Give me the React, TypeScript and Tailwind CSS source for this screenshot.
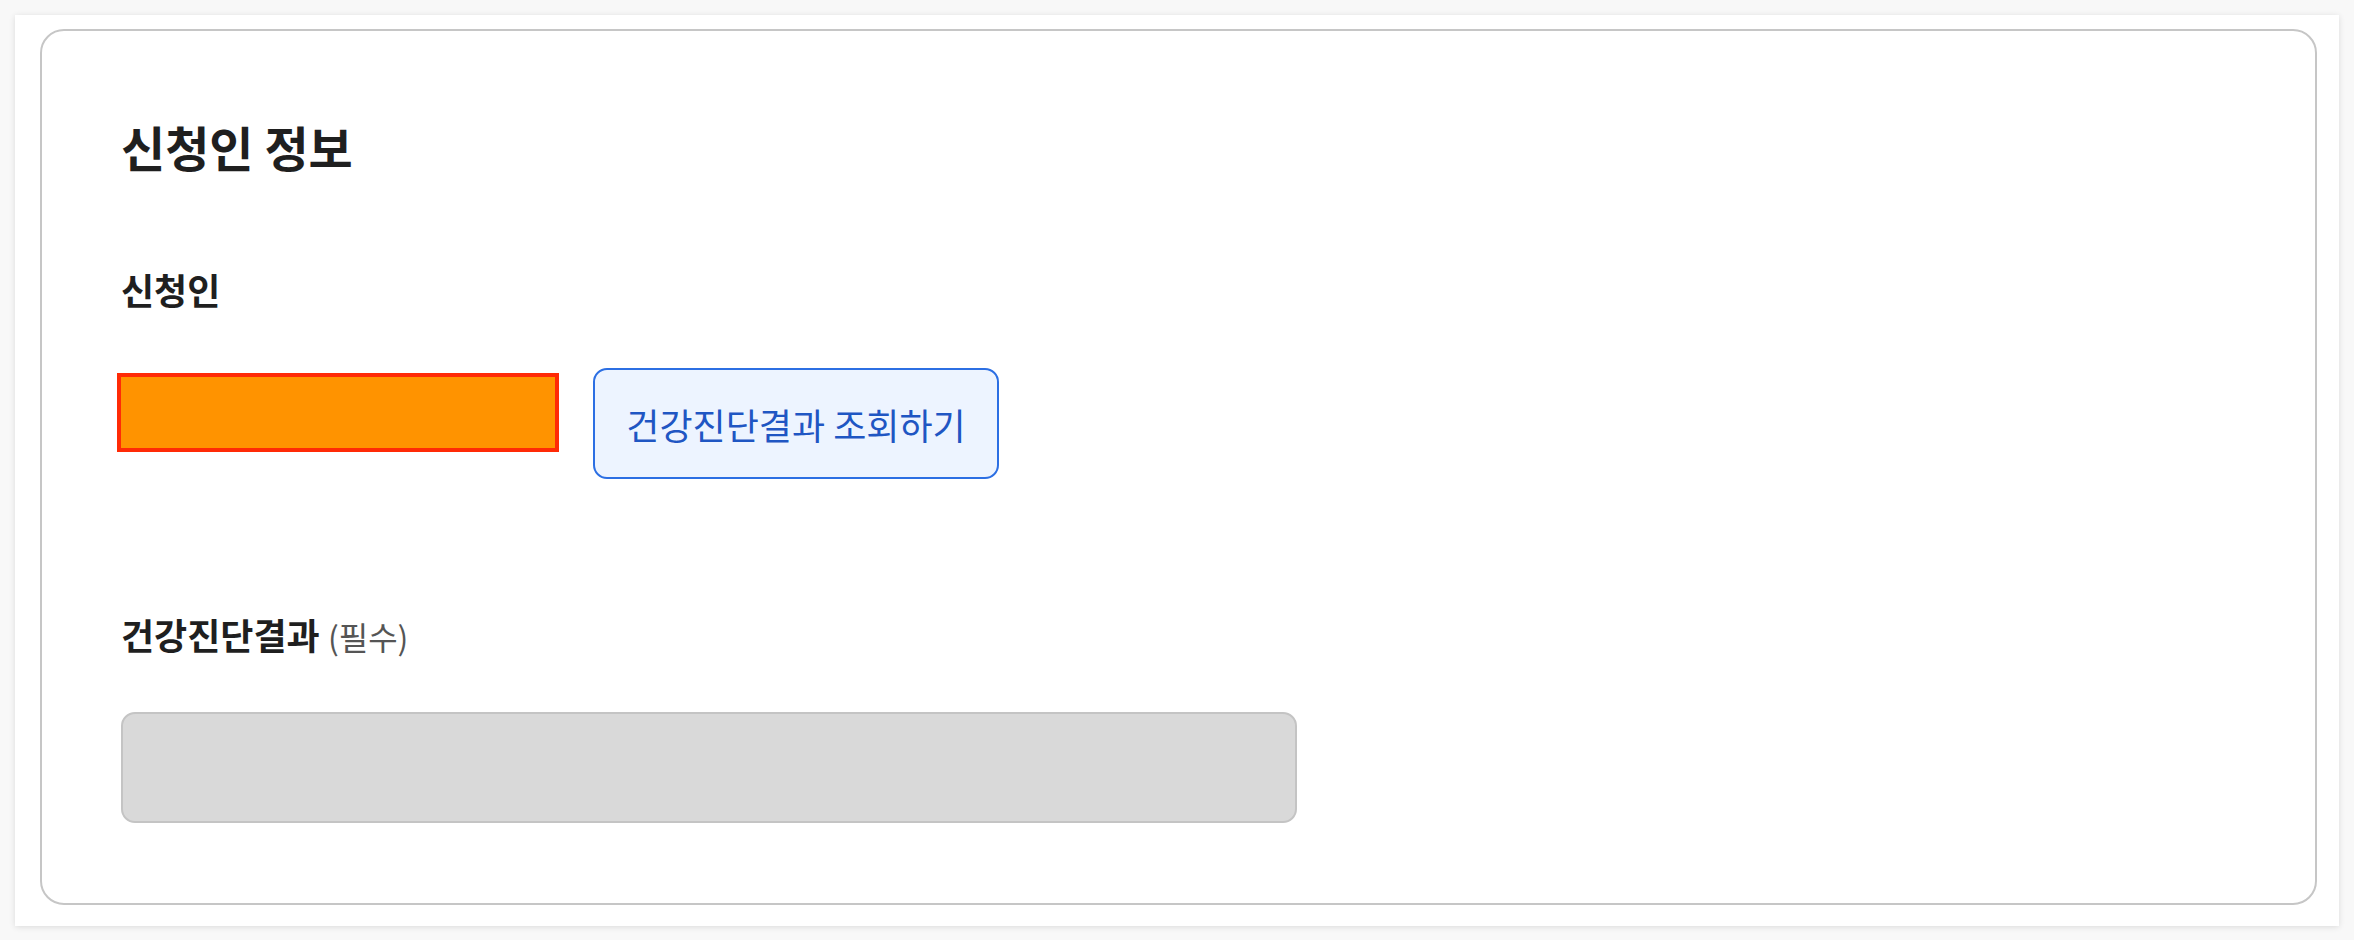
import React from 'react';

const font = { fontFamily: '"Noto Sans CJK KR", "Noto Sans", sans-serif' };

export default function App() {
  return (
    <div className="min-h-screen bg-[#f8f8f8] p-[15px]" style={font}>
      <div className="bg-white pt-[14px] pl-[25px] pr-[22px] pb-[21px] shadow-[0_1px_6px_rgba(0,0,0,0.12)]">
        <section className="rounded-[24px] border-2 border-[#c6c6c6] pt-[91px] pb-[80px] pl-[79px]">
          <h2 className="text-[48px] font-bold leading-none text-[#1f1f1f]">신청인 정보</h2>

          <h3 className="mt-[101px] text-[36px] font-bold leading-none text-[#1f1f1f]">신청인</h3>
          <div className="mt-[61px] flex items-start">
            {/* masked name field */}
            <div className="mt-[5px] -ml-[4px] h-[79px] w-[442px] border-4 border-[#ff2a06] bg-[#ff9300]" />
            <button
              type="button"
              className="ml-[34px] h-[111px] w-[406px] rounded-[14px] border-2 border-[#2c6fe3] bg-[#edf4ff] text-[36px] leading-none text-[#1f56c3]"
            >
              건강진단결과 조회하기
            </button>
          </div>

          <h3 className="mt-[137px] text-[36px] font-bold leading-none text-[#1f1f1f]">
            건강진단결과 <span className="text-[32px] font-normal text-[#555555]">(필수)</span>
          </h3>
          <div className="mt-[60px] h-[111px] w-[1176px] rounded-[14px] border-2 border-[#c4c4c4] bg-[#d9d9d9]" />
        </section>
      </div>
    </div>
  );
}
